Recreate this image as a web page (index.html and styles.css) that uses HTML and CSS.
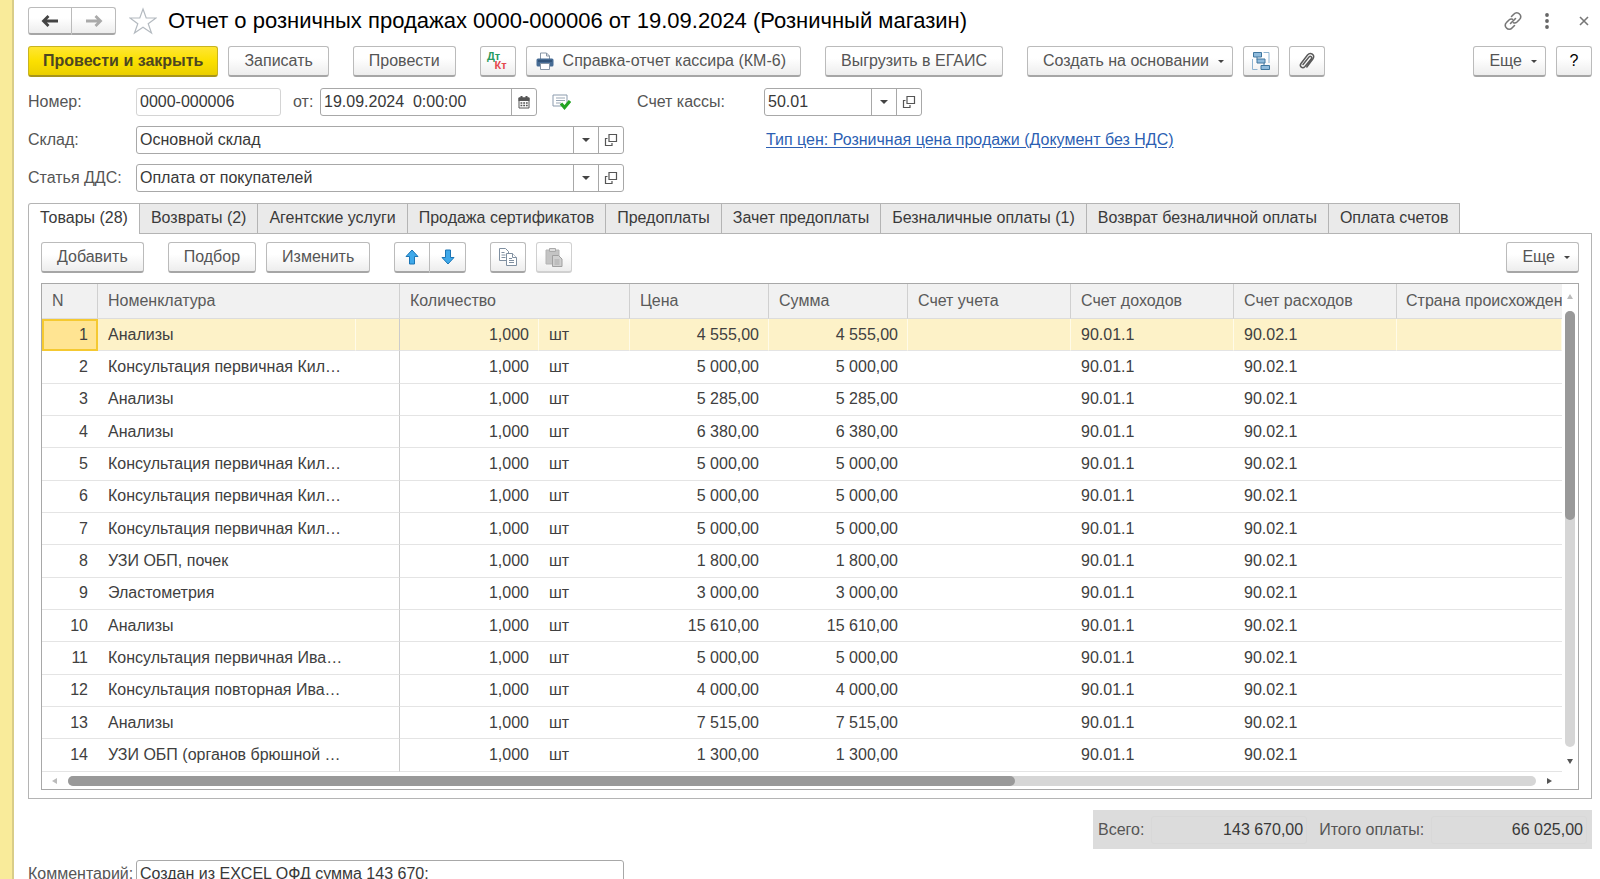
FILE: index.html
```html
<!DOCTYPE html>
<html lang="ru">
<head>
<meta charset="utf-8">
<title>Отчет о розничных продажах</title>
<link rel="stylesheet" href="styles.css">
</head>
<body>
<svg class="sprite" aria-hidden="true">
  <symbol id="open" viewBox="0 0 14 14"><path d="M5 1.500h7.500v7H5zM3.500 5.500H1.500v7h6.500v-2.500" fill="none" stroke="#555" stroke-width="1.200"/></symbol>
</svg>
<div class="window">
<main class="form">
  <header class="titlebar">
    <div class="group">
      <button class="btn nav" type="button" aria-label="Назад"><svg width="18" height="14" viewBox="0 0 18 14"><path d="M7.500 2L2.500 7l5 5M3 7h14" fill="none" stroke="#444" stroke-width="2.800"/></svg></button>
      <button class="btn nav" type="button" aria-label="Вперед"><svg width="18" height="14" viewBox="0 0 18 14"><path d="M10.500 2l5 5-5 5M15 7H1" fill="none" stroke="#aaa" stroke-width="2.800"/></svg></button>
    </div>
    <button class="plain star" type="button" aria-label="В избранное"><svg width="28" height="28" viewBox="0 0 28 28"><path d="M14 2l3.200 9H27l-7.800 5.800L22.500 26 14 20.200 5.500 26l3.300-9.200L1 11h9.800z" fill="none" stroke="#b4bac0" stroke-width="1.200"/></svg></button>
    <h1>Отчет о розничных продажах 0000-000006 от 19.09.2024 (Розничный магазин)</h1>
    <div class="wintools">
      <button class="plain" type="button" aria-label="Ссылка"><svg width="20" height="20" viewBox="0 0 20 20"><g fill="none" stroke="#777" stroke-width="1.600" stroke-linecap="round"><path d="M8.500 5.500l2.500-2.500a3.600 3.600 0 0 1 5.500 0a3.600 3.600 0 0 1 0 5.500L14 11a3.600 3.600 0 0 1-3.500 0.800"/><path d="M11.500 14.500L9 17a3.600 3.600 0 0 1-5.500 0a3.600 3.600 0 0 1 0-5.500L6 9a3.600 3.600 0 0 1 3.500-0.800"/><path d="M7.500 12.500l5-5"/></g></svg></button>
      <button class="plain" type="button" aria-label="Меню"><svg width="6" height="18" viewBox="0 0 6 18"><g fill="#666"><circle cx="3" cy="3" r="1.900"/><circle cx="3" cy="9" r="1.900"/><circle cx="3" cy="15" r="1.900"/></g></svg></button>
      <button class="plain close" type="button" aria-label="Закрыть"><svg width="10" height="10" viewBox="0 0 10 10"><path d="M1 1l8 8M9 1L1 9" stroke="#777" stroke-width="1.600"/></svg></button>
    </div>
  </header>

  <div class="toolbar">
    <button class="btn primary" type="button">Провести и закрыть</button>
    <button class="btn wide-gap" type="button">Записать</button>
    <button class="btn wide-gap" type="button">Провести</button>
    <button class="btn icon dtkt" type="button"><span class="dt">Дт</span><span class="kt">Кт</span></button>
    <button class="btn print wide-gap" type="button"><svg width="18" height="18" viewBox="0 0 18 18"><path d="M4.500 7V1h6l3 3v3" fill="#fff" stroke="#8795a5"/><path d="M10.500 1v3h3" fill="none" stroke="#8795a5"/><rect x="0.500" y="6.500" width="17" height="8" rx="1.500" fill="#466b94"/><path d="M2 9h14" stroke="#2d4b70" stroke-width="1.500"/><path d="M4.500 11.500h9v6h-9z" fill="#fff" stroke="#8795a5"/></svg>Справка-отчет кассира (КМ-6)</button>
    <button class="btn wide-gap" type="button">Выгрузить в ЕГАИС</button>
    <button class="btn drop" type="button">Создать на основании<i class="caret"></i></button>
    <button class="btn icon" type="button" aria-label="Структура подчиненности"><svg width="20" height="20" viewBox="0 0 20 20"><path d="M12.500 1.500h5.500V12M1.500 8v10.500h5" fill="none" stroke="#8fb4d0"/><path d="M6 6v2.500M13 12v2.500" stroke="#40779f"/><g fill="#8fbbdc" stroke="#40779f"><path d="M2.500 1.500h8v4.500h-8zM6 8h8v4H6zM10 14.500h8.500v4H10z"/></g></svg></button>
    <button class="btn icon" type="button" aria-label="Файлы"><svg width="18" height="20" viewBox="0 0 18 20"><path d="M5 13.500l6-7.500c1.500-1.700 3.500 0 2.300 1.700l-6.300 7.800c-2.500 2.800-6 0-4-3L9.500 4c3-3.500 8 0 5.300 4l-6 8" fill="none" stroke="#5a5a5a" stroke-width="1.500" stroke-linecap="round"/></svg></button>
    <span class="spacer"></span>
    <button class="btn drop more" type="button">Еще<i class="caret"></i></button>
    <button class="btn icon help" type="button">?</button>
  </div>

  <div class="fields">
    <label for="num">Номер:</label>
    <div class="row">
      <input class="box number" id="num" value="0000-000006">
      <label class="from" for="date">от:</label>
      <div class="box combo date"><input id="date" value="19.09.2024  0:00:00"><button type="button" aria-label="Календарь"><svg width="12" height="13" viewBox="0 0 12 13"><path d="M1 2h10v10H1z" fill="#fff" stroke="#555"/><path d="M0.500 1.500h11V5H0.500z" fill="#555"/><path d="M3.500 0v3M8.500 0v3" stroke="#555" stroke-width="2"/><path d="M2.500 7h8M2.500 9.500h8" stroke="#555" stroke-width="1.500" stroke-dasharray="1.800 0.900"/></svg></button></div>
      <svg class="posted" width="19" height="16" viewBox="0 0 19 16"><path d="M1 1h14v11H1z" fill="#fff" stroke="#8b9bad"/><path d="M4 4h9M4 6.500h9M4 9h5" stroke="#9aa7b5"/><path d="M9 9.500l3.500 4L18 7" fill="none" stroke="#23a423" stroke-width="3.200"/></svg>
      <label class="cash-label" for="cash">Счет кассы:</label>
      <div class="box combo cash"><input id="cash" value="50.01"><button type="button" aria-label="Выбрать"><i class="caret"></i></button><button type="button" aria-label="Открыть"><svg width="14" height="14"><use href="#open"/></svg></button></div>
    </div>
    <label for="store">Склад:</label>
    <div class="row">
      <div class="box combo long"><input id="store" value="Основной склад"><button type="button" aria-label="Выбрать"><i class="caret"></i></button><button type="button" aria-label="Открыть"><svg width="14" height="14"><use href="#open"/></svg></button></div>
      <a class="price" href="#">Тип цен: Розничная цена продажи (Документ без НДС)</a>
    </div>
    <label for="dds">Статья ДДС:</label>
    <div class="row">
      <div class="box combo long"><input id="dds" value="Оплата от покупателей"><button type="button" aria-label="Выбрать"><i class="caret"></i></button><button type="button" aria-label="Открыть"><svg width="14" height="14"><use href="#open"/></svg></button></div>
    </div>
  </div>

  <nav class="tabs">
    <button class="tab active" type="button">Товары (28)</button><button class="tab" type="button">Возвраты (2)</button><button class="tab" type="button">Агентские услуги</button><button class="tab" type="button">Продажа сертификатов</button><button class="tab" type="button">Предоплаты</button><button class="tab" type="button">Зачет предоплаты</button><button class="tab" type="button">Безналичные оплаты (1)</button><button class="tab" type="button">Возврат безналичной оплаты</button><button class="tab" type="button">Оплата счетов</button>
  </nav>

  <section class="panel">
    <div class="toolbar">
      <button class="btn wide-gap" type="button">Добавить</button>
      <button class="btn" type="button">Подбор</button>
      <button class="btn wide-gap" type="button">Изменить</button>
      <div class="group wide-gap">
        <button class="btn icon" type="button" aria-label="Вверх"><svg width="14" height="16" viewBox="0 0 14 16"><path d="M7 1l6 6.500H9.500V15h-5V7.500H1z" fill="#3fa9ea" stroke="#1b75b5"/></svg></button>
        <button class="btn icon" type="button" aria-label="Вниз"><svg width="14" height="16" viewBox="0 0 14 16"><path d="M7 15l6-6.500H9.500V1h-5v7.500H1z" fill="#3fa9ea" stroke="#1b75b5"/></svg></button>
      </div>
      <button class="btn icon" type="button" aria-label="Копировать"><svg width="20" height="20" viewBox="0 0 20 20"><g fill="#fff" stroke="#7f8fa0"><path d="M1.500 1.500h6l3 3v9h-9z"/><path d="M8.500 6.500h6l4 4v8h-10z"/><path d="M14.500 6.500v4h4M3.500 5.500h3M3.500 8h4M3.500 10.500h4M11 11.500h3M11 13.500h5M11 15.500h5"/></g></svg></button>
      <button class="btn icon" type="button" disabled aria-label="Вставить"><svg width="18" height="19" viewBox="0 0 18 19"><path d="M1 2h13v14H1z" fill="#c4c4c4" stroke="#b4b4b4"/><path d="M4.500 0.500h6v3h-6z" fill="#ddd" stroke="#aaa"/><path d="M7.500 7.500h6l3.500 3.500v7.500H7.500z" fill="#d0d0d0" stroke="#a0a0a0"/><path d="M9.500 12h5M9.500 14h5M9.500 16h5" stroke="#aaa"/></svg></button>
      <span class="spacer"></span>
      <button class="btn drop more" type="button">Еще<i class="caret"></i></button>
    </div>
    <div class="grid">
      <div class="view">
        <table>
          <colgroup><col class="c-n"><col class="c-name"><col class="c-mark"><col class="c-qty"><col class="c-unit"><col class="c-sum"><col class="c-sum"><col class="c-acc"><col class="c-acc"><col class="c-acc"><col></colgroup>
          <thead><tr><th>N</th><th colspan="2">Номенклатура</th><th colspan="2">Количество</th><th>Цена</th><th>Сумма</th><th>Счет учета</th><th>Счет доходов</th><th>Счет расходов</th><th>Страна происхождения</th></tr></thead>
          <tbody>
            <tr class="sel"><td>1</td><td>Анализы</td><td></td><td>1,000</td><td>шт</td><td>4 555,00</td><td>4 555,00</td><td></td><td>90.01.1</td><td>90.02.1</td><td></td></tr>
            <tr><td>2</td><td>Консультация первичная Кил…</td><td></td><td>1,000</td><td>шт</td><td>5 000,00</td><td>5 000,00</td><td></td><td>90.01.1</td><td>90.02.1</td><td></td></tr>
            <tr><td>3</td><td>Анализы</td><td></td><td>1,000</td><td>шт</td><td>5 285,00</td><td>5 285,00</td><td></td><td>90.01.1</td><td>90.02.1</td><td></td></tr>
            <tr><td>4</td><td>Анализы</td><td></td><td>1,000</td><td>шт</td><td>6 380,00</td><td>6 380,00</td><td></td><td>90.01.1</td><td>90.02.1</td><td></td></tr>
            <tr><td>5</td><td>Консультация первичная Кил…</td><td></td><td>1,000</td><td>шт</td><td>5 000,00</td><td>5 000,00</td><td></td><td>90.01.1</td><td>90.02.1</td><td></td></tr>
            <tr><td>6</td><td>Консультация первичная Кил…</td><td></td><td>1,000</td><td>шт</td><td>5 000,00</td><td>5 000,00</td><td></td><td>90.01.1</td><td>90.02.1</td><td></td></tr>
            <tr><td>7</td><td>Консультация первичная Кил…</td><td></td><td>1,000</td><td>шт</td><td>5 000,00</td><td>5 000,00</td><td></td><td>90.01.1</td><td>90.02.1</td><td></td></tr>
            <tr><td>8</td><td>УЗИ ОБП, почек</td><td></td><td>1,000</td><td>шт</td><td>1 800,00</td><td>1 800,00</td><td></td><td>90.01.1</td><td>90.02.1</td><td></td></tr>
            <tr><td>9</td><td>Эластометрия</td><td></td><td>1,000</td><td>шт</td><td>3 000,00</td><td>3 000,00</td><td></td><td>90.01.1</td><td>90.02.1</td><td></td></tr>
            <tr><td>10</td><td>Анализы</td><td></td><td>1,000</td><td>шт</td><td>15 610,00</td><td>15 610,00</td><td></td><td>90.01.1</td><td>90.02.1</td><td></td></tr>
            <tr><td>11</td><td>Консультация первичная Ива…</td><td></td><td>1,000</td><td>шт</td><td>5 000,00</td><td>5 000,00</td><td></td><td>90.01.1</td><td>90.02.1</td><td></td></tr>
            <tr><td>12</td><td>Консультация повторная Ива…</td><td></td><td>1,000</td><td>шт</td><td>4 000,00</td><td>4 000,00</td><td></td><td>90.01.1</td><td>90.02.1</td><td></td></tr>
            <tr><td>13</td><td>Анализы</td><td></td><td>1,000</td><td>шт</td><td>7 515,00</td><td>7 515,00</td><td></td><td>90.01.1</td><td>90.02.1</td><td></td></tr>
            <tr><td>14</td><td>УЗИ ОБП (органов брюшной …</td><td></td><td>1,000</td><td>шт</td><td>1 300,00</td><td>1 300,00</td><td></td><td>90.01.1</td><td>90.02.1</td><td></td></tr>
          </tbody>
        </table>
      </div>
      <div class="vscroll"><i class="arrow up"></i><div class="track"><div class="thumb"></div></div><i class="arrow down"></i></div>
      <div class="hscroll"><i class="arrow left"></i><div class="track"><div class="thumb"></div></div><i class="arrow right"></i></div>
    </div>
  </section>

  <div class="totals">
    <label for="total">Всего:</label><output id="total">143 670,00</output>
    <label for="paid">Итого оплаты:</label><output id="paid">66 025,00</output>
  </div>

  <div class="fields comment">
    <label for="comment">Комментарий:</label>
    <input class="box long" id="comment" value="Создан из EXCEL ОФД сумма 143 670;">
  </div>
</main>
</div>
</body>
</html>
```
FILE: styles.css
```css
* { box-sizing: border-box; }
html, body { margin: 0; height: 100%; overflow: hidden; }
body { background: #fff; color: #404040; font: 16px/20px "Liberation Sans", Arial, sans-serif; }
button, input { font: inherit; color: inherit; margin: 0; }
svg { display: block; flex: none; }
.sprite { display: none; }
.window { min-height: 100%; border-left: 12px solid #f9eb9a; }
.form { border-left: 2px solid #d9cd88; padding: 7px 8px 0 14px; }

.titlebar { display: flex; align-items: center; height: 28px; }
h1 { margin: 0 0 0 11px; font-size: 22px; line-height: 28px; font-weight: 400; color: #000; white-space: nowrap; }
.plain { border: 0; background: none; padding: 0; }
.star { margin-left: 13px; }
.wintools { margin-left: auto; display: flex; align-items: center; gap: 21px; padding-right: 3px; }
.close { margin-left: 8px; }

.btn { display: flex; align-items: center; justify-content: center; height: 31px; padding: 0 15px; border: 1px solid #bbb; border-bottom: 2px solid #a6a6a6; border-radius: 3px; background: linear-gradient(#fff 40%, #ededed); color: #555; white-space: nowrap; }
.btn.icon { width: 36px; padding: 0; }
.btn.primary { padding: 0 14px; background: linear-gradient(#ffe633, #fbe000 50%, #ebcf00); border-color: #c8b420; border-bottom-color: #a8951a; color: #4c4622; font-weight: 700; }
.btn:disabled { border-color: #d0d0d0; }
.btn.nav { width: 44px; height: 28px; padding: 0; }
.btn.drop { gap: 9px; padding: 0 8px 0 15px; }
.btn.help { color: #000; }
.btn.print { gap: 9px; padding: 0 14px 0 9px; }
.group { display: flex; }
.group .btn:first-child { border-radius: 3px 0 0 3px; }
.group .btn:last-child { border-radius: 0 3px 3px 0; border-left: 0; }
.caret { border: 3px solid transparent; border-top-color: #444; border-bottom: 0; }
.toolbar { display: flex; gap: 10px; margin-top: 11px; }
.toolbar .wide-gap { margin-right: 14px; }
.spacer { flex: 1; }
.dtkt { flex-direction: column; font-size: 11px; line-height: 9px; font-weight: 700; }
.dt { color: #289a60; padding-right: 8px; }
.kt { color: #e5484d; padding-left: 6px; }

.fields { display: grid; grid-template-columns: 108px 1fr; row-gap: 10px; align-items: center; margin-top: 11px; }
.fields label { color: #555; white-space: nowrap; }
.row { display: flex; align-items: center; }
.box { height: 28px; border: 1px solid #a8a8a8; border-radius: 3px; background: #fff; color: #383838; }
input.box { padding: 0 3px; }
.number { width: 145px; border-color: #d4d4d4; }
.from { margin-left: 12px; width: 27px; }
.combo { display: flex; }
.combo input { flex: 1; min-width: 0; border: 0; padding: 0 3px; background: none; white-space: pre; }
.combo button { width: 25px; padding: 0; border: 0; border-left: 1px solid #a8a8a8; background: none; display: flex; align-items: center; justify-content: center; }
.combo .caret { border-width: 4px 4px 0; }
.date { width: 217px; }
.posted { margin-left: 15px; }
.cash-label { margin-left: 66px; width: 127px; }
.cash { width: 158px; }
.long { width: 488px; }
.price { margin-left: 142px; color: #2c5fb3; text-underline-offset: 2px; }

.tabs { display: flex; margin-top: 11px; position: relative; }
.tab { height: 30px; padding: 0 11px 2px; border: 1px solid #b4b4b4; border-left-width: 0; border-bottom: 0; background: #eaeaea; color: #3a3a3a; white-space: nowrap; }
.tab.active { height: 31px; margin-bottom: -1px; padding-bottom: 3px; border-left-width: 1px; border-top-left-radius: 3px; background: #fff; }
.panel { border: 1px solid #b4b4b4; padding: 8px 12px 8px; }
.panel .toolbar { margin-top: 0; }

.grid { display: grid; grid-template-columns: 1fr 16px; margin-top: 10px; border: 1px solid #a8a8a8; }
.view { min-width: 0; overflow: hidden; }
table { width: 100%; height: 488px; table-layout: fixed; border-collapse: separate; border-spacing: 0; }
.c-n { width: 56px; } .c-name { width: 258px; } .c-mark { width: 44px; } .c-qty { width: 139px; } .c-unit { width: 91px; } .c-sum { width: 139px; } .c-acc { width: 163px; }
th { height: 35px; padding: 0 10px; background: #f1f1f1; border-right: 1px solid #d0d0d0; border-bottom: 1px solid #dcdcdc; color: #5a5a5a; font-weight: 400; text-align: left; white-space: nowrap; overflow: hidden; }
th:last-child { border-right: 0; padding-left: 9px; }
td { padding: 0 10px; border-bottom: 1px solid #e4e4e4; text-align: left; white-space: nowrap; }
td:nth-child(1), td:nth-child(4), td:nth-child(6), td:nth-child(7) { text-align: right; }
.sel td { background: #fdf2c8; border-right: 1px solid #fffbe8; }
.sel td:nth-child(1), .sel td:nth-child(4), .sel td:nth-child(6), .sel td:nth-child(7) { padding-right: 9px; }
td:nth-child(3), .sel td:nth-child(3) { border-right: 1px solid #ccc; }
.sel td:first-child { background: #ffe492; outline: 2px solid #f5c931; outline-offset: -2px; }

.track { flex: 1; background: #d6d6d6; border-radius: 5px; }
.thumb { background: #999; border-radius: 5px; }
.vscroll { display: flex; flex-direction: column; align-items: center; padding: 10px 0 8px; }
.vscroll .track { width: 10px; margin: 12px 0; }
.vscroll .thumb { height: 48%; }
.hscroll { display: flex; align-items: center; padding: 3px 10px; height: 17px; }
.hscroll .track { height: 10px; margin: 0 11px; }
.hscroll .thumb { width: 64.5%; height: 10px; }
.arrow { border: 3px solid transparent; }
.up { border-bottom: 5px solid #bbb; border-top: 0; }
.down { border-top: 5px solid #555; border-bottom: 0; }
.left { border-right: 5px solid #bbb; border-left: 0; }
.right { border-left: 5px solid #555; border-right: 0; }

.totals { display: flex; align-items: center; width: 499px; height: 39px; margin: 11px 0 0 auto; padding: 0 5px; background: #dcdcdc; color: #555; }
.totals output { flex: 1; margin-left: 7px; padding: 3px; border: 1px solid #d8d8d8; border-radius: 3px; color: #383838; text-align: right; }
.totals output + label { margin-left: 12px; }
```
